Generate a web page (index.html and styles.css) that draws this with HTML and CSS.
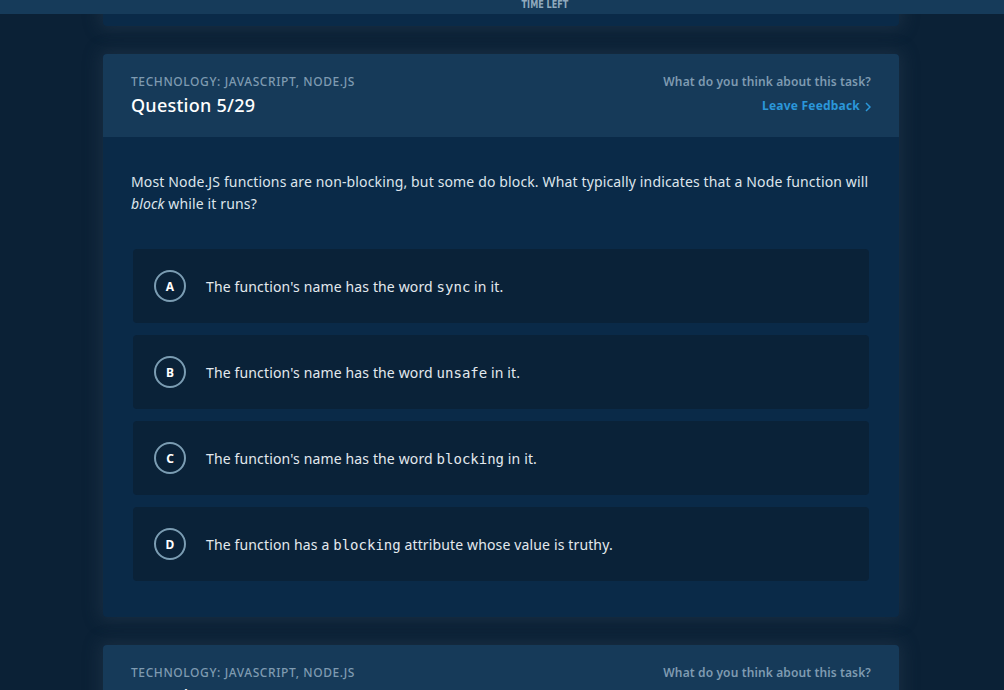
FILE: index.html
```html
<!DOCTYPE html>
<html>
<head>
<meta charset="utf-8">
<link rel="stylesheet" href="styles.css">
</head>
<body>
<div class="topbar"><span class="timeleft">TIME LEFT</span></div>
<main class="page">
  <section class="card card-prev"></section>
  <section class="card">
    <header class="card-head">
      <div class="head-left">
        <div class="tech">TECHNOLOGY: JAVASCRIPT, NODE.JS</div>
        <div class="qnum">Question 5/29</div>
      </div>
      <div class="head-right">
        <div class="ask">What do you think about this task?</div>
        <a class="feedback">Leave Feedback <svg class="chev" width="6" height="10" viewBox="0 0 6 10"><path d="M1 1l4 4-4 4" fill="none" stroke="currentColor" stroke-width="1.5"/></svg></a>
      </div>
    </header>
    <div class="card-body">
      <p class="question">Most Node.JS functions are non-blocking, but some do block. What typically indicates that a Node function will <em>block</em> while it runs?</p>
      <div class="options">
        <div class="option"><span class="letter">A</span><span class="otext">The function's name has the word <code>sync</code> in it.</span></div>
        <div class="option"><span class="letter">B</span><span class="otext">The function's name has the word <code>unsafe</code> in it.</span></div>
        <div class="option"><span class="letter">C</span><span class="otext">The function's name has the word <code>blocking</code> in it.</span></div>
        <div class="option"><span class="letter">D</span><span class="otext">The function has a <code>blocking</code> attribute whose value is truthy.</span></div>
      </div>
    </div>
  </section>
  <section class="card">
    <header class="card-head">
      <div class="head-left">
        <div class="tech">TECHNOLOGY: JAVASCRIPT, NODE.JS</div>
        <div class="qnum">Question 6/29</div>
      </div>
      <div class="head-right">
        <div class="ask">What do you think about this task?</div>
        <a class="feedback">Leave Feedback <svg class="chev" width="6" height="10" viewBox="0 0 6 10"><path d="M1 1l4 4-4 4" fill="none" stroke="currentColor" stroke-width="1.5"/></svg></a>
      </div>
    </header>
  </section>
</main>
</body>
</html>
```
FILE: styles.css
```css
html, body { margin: 0; padding: 0; }
body {
  background: #0b2136;
  font-family: "Noto Sans", "Open Sans", sans-serif;
  color: #e3e9ee;
  overflow: hidden;
  height: 690px;
}
.topbar {
  position: fixed;
  top: 0; left: 0; right: 0;
  height: 14px;
  background: #163b5a;
  z-index: 5;
  display: flex;
  justify-content: center;
  overflow: hidden;
}
.timeleft {
  font-family: "DejaVu Sans Condensed", "Liberation Sans Narrow", sans-serif;
  font-stretch: condensed;
  font-size: 10px;
  font-weight: bold;
  color: #8fa9bd;
  line-height: 10px;
  margin-top: 0;
  margin-left: 85px;
  transform: scaleX(0.9);
}
.page {
  padding: 0 105px 0 103px;
  display: flex;
  flex-direction: column;
  gap: 28px;
}
.card {
  background: #0a2a48;
  border-radius: 4px;
  box-shadow: 0 0 16px 4px rgba(40, 60, 80, 0.45);
  overflow: hidden;
}
.card-prev { height: 26px; border-radius: 0 0 4px 4px; }
.card-head {
  background: #163a59;
  height: 83px;
  box-sizing: border-box;
  padding: 20px 28px 0 28px;
  display: flex;
  justify-content: space-between;
}
.tech {
  font-size: 12px;
  line-height: 16px;
  letter-spacing: 0.6px;
  color: #7f9bb1;
  font-weight: 500;
}
.qnum {
  font-size: 18px;
  line-height: 24px;
  font-weight: 500;
  letter-spacing: 0.25px;
  color: #ffffff;
  margin-top: 3px;
}
.head-right { text-align: right; }
.ask {
  font-size: 12px;
  line-height: 16px;
  font-weight: 600;
  letter-spacing: 0.12px;
  color: #7f9bb1;
}
.feedback {
  display: inline-flex;
  align-items: center;
  gap: 5px;
  margin-top: 8px;
  font-size: 12px;
  line-height: 16px;
  font-weight: 700;
  letter-spacing: 0.2px;
  color: #2b97d9;
}
.chev { margin-top: 1px; }
.card-body { padding: 34px 28px 36px 28px; }
.question {
  margin: 0 0 34px 0;
  font-size: 14px;
  line-height: 22px;
  letter-spacing: 0.14px;
  color: #dde5ec;
}
.options { display: flex; flex-direction: column; gap: 12px; padding: 0 2px; }
.option {
  height: 74px;
  background: #0a2238;
  border-radius: 4px;
  display: flex;
  align-items: center;
  padding-left: 21px;
}
.letter {
  width: 28px; height: 28px;
  border: 2px solid #7b9db3;
  border-radius: 50%;
  display: flex;
  align-items: center;
  justify-content: center;
  font-size: 12px;
  font-weight: 700;
  color: #ffffff;
  flex: none;
}
.otext {
  margin-left: 20px;
  font-size: 14px;
  letter-spacing: 0.14px;
  color: #e3e9ee;
}
code {
  font-family: "DejaVu Sans Mono", monospace;
  font-size: 14px;
  letter-spacing: 0;
}
```
